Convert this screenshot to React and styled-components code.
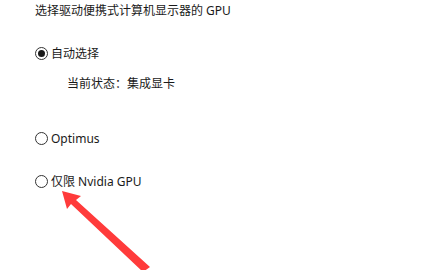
import { createGlobalStyle, styled } from 'styled-components';

const GlobalStyle = createGlobalStyle`
  html, body {
    margin: 0;
    padding: 0;
    background: #ffffff;
  }
  body {
    font-family: "Noto Sans", "Noto Sans CJK SC", sans-serif;
    color: #1a1a1a;
  }
`;

function Radio({ checked, label }) {
  return (
    <RadioRow>
      <Circle $checked={checked} />
      <Label>{label}</Label>
    </RadioRow>
  );
}

function App() {
  return (
    <Page>
      <GlobalStyle />
      <Heading>选择驱动便携式计算机显示器的 GPU</Heading>
      <Options>
        <Group>
          <Radio checked label="自动选择" />
          <Status>当前状态：集成显卡</Status>
        </Group>
        <Radio label="Optimus" />
        <Radio label="仅限 Nvidia GPU" />
      </Options>
      <Arrow viewBox="0 0 438 270" width="438" height="270">
        <polygon
          points="62,191 81,196 76,200 150,267 143,272 71,204 67,209"
          fill="#ff3b3b"
        />
      </Arrow>
    </Page>
  );
}

const Page = styled.div`
  position: relative;
  width: 438px;
  height: 270px;
  padding-left: 35px;
  box-sizing: border-box;
  overflow: hidden;
`;

const Heading = styled.div`
  font-size: 12px;
  line-height: 20px;
  padding-top: 0.5px;
`;

const Options = styled.div`
  display: flex;
  flex-direction: column;
  margin-top: 23px;
`;

const Group = styled.div`
  display: flex;
  flex-direction: column;
  height: 85px;
`;

const RadioRow = styled.label`
  display: flex;
  align-items: center;
  gap: 3px;
  height: 20px;
  font-size: 12px;
  margin-bottom: 23px;
  &:last-child { margin-bottom: 0; }
`;

const Circle = styled.span`
  width: 13px;
  height: 13px;
  box-sizing: border-box;
  border: 1px solid #333;
  border-radius: 50%;
  display: flex;
  align-items: center;
  justify-content: center;
  flex-shrink: 0;

  &::after {
    content: '';
    display: ${(p) => (p.$checked ? 'block' : 'none')};
    width: 7px;
    height: 7px;
    border-radius: 50%;
    background: #1a1a1a;
  }
`;

const Label = styled.span`
  line-height: 20px;
`;

const Status = styled.div`
  font-size: 12px;
  line-height: 20px;
  margin-top: -13px;
  padding-left: 32px;
`;

const Arrow = styled.svg`
  position: absolute;
  left: 0;
  top: 0;
  pointer-events: none;
`;

export default App;
